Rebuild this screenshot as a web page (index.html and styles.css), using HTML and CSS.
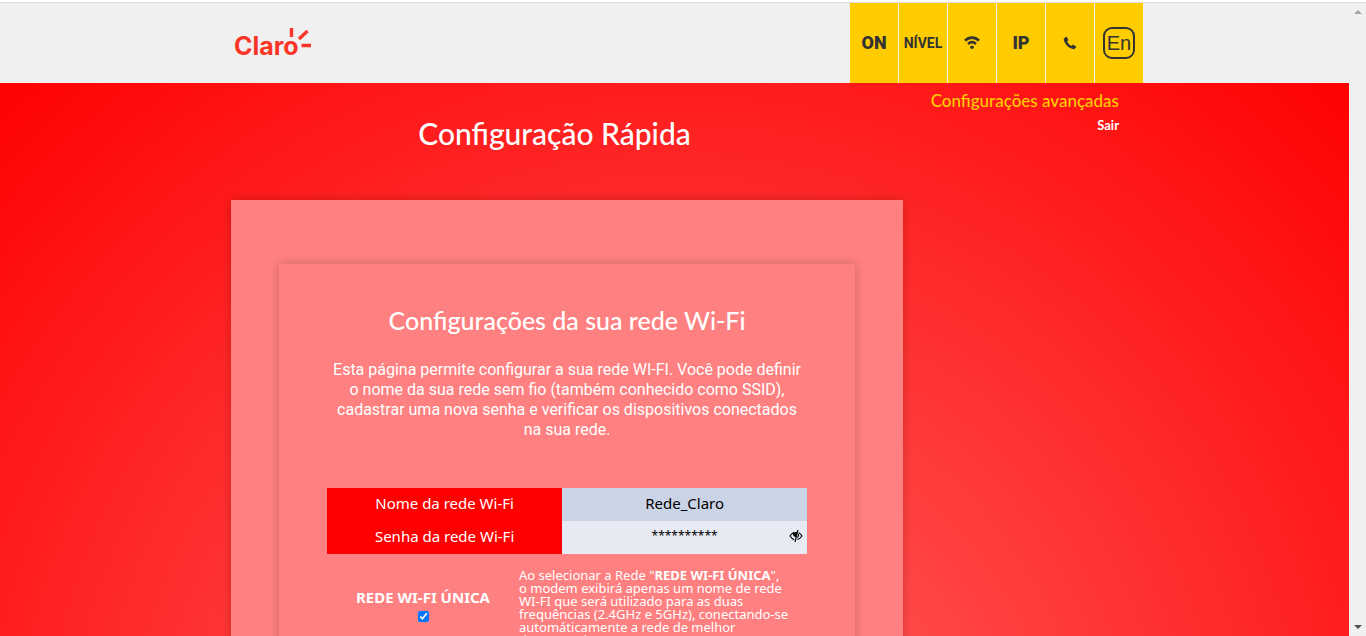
FILE: index.html
```html
<!DOCTYPE html>
<html lang="pt-BR">
  <head>
    <meta charset="UTF-8" />
    <meta name="viewport" content="width=device-width, initial-scale=1" />
    <title>Configuração Rápida</title>
    <link rel="stylesheet" href="styles.css">
  </head>
  <body>
    <div class="page">
      <header class="header">
        <div class="container header-inner">
          <a class="logo" href="#">
            <span class="logo-text">Claro</span>
            <svg class="logo-rays" width="24" height="22" viewBox="0 0 24 22" aria-hidden="true">
              <path d="M4.5 1V10M12 12L20.5 4M14.5 18.5H24" fill="none" stroke="#fb3527" stroke-width="3.4" />
            </svg>
          </a>
          <nav class="status">
            <a class="status-item" href="#">ON</a>
            <a class="status-item small" href="#">NÍVEL</a>
            <a class="status-item" href="#" aria-label="Wi-Fi">
              <svg width="16" height="14" viewBox="0 0 16 14">
                <path d="M1 4.6C5 .6 11 .6 15 4.6M4 8C6.4 5.8 9.6 5.8 12 8" fill="none" stroke="#333" stroke-width="2.6" />
                <circle cx="8" cy="11.3" r="1.8" fill="#333" />
              </svg>
            </a>
            <a class="status-item" href="#">IP</a>
            <a class="status-item" href="#" aria-label="Telefone">
              <svg width="14" height="14" viewBox="0 0 14 14">
                <path d="M1.2 2.2L3 .8Q3.6.5 4 1.2L5.2 3.8Q5.4 4.4 4.9 4.8L4 5.6Q5.4 8.4 8.2 9.9L9.3 8.9Q9.8 8.5 10.3 8.8L12.9 10.2Q13.5 10.6 13.1 11.2L11.7 12.8Q11 13.5 9.8 13.1Q2.8 10.8.8 4.2Q.5 2.9 1.2 2.2Z" fill="#333" />
              </svg>
            </a>
            <a class="status-item" href="#"><span class="lang">En</span></a>
          </nav>
        </div>
      </header>

      <main class="main">
        <div class="container main-inner">
          <div class="content">
            <h1>Configuração Rápida</h1>
            <section class="panel">
              <form class="card">
                <h2>Configurações da sua rede Wi-Fi</h2>
                <p class="intro">Esta página permite configurar a sua rede WI-FI. Você pode definir o nome da sua rede sem fio (também conhecido como SSID), cadastrar uma nova senha e verificar os dispositivos conectados na sua rede.</p>

                <table class="wifi-table">
                  <tr>
                    <th><label for="ssid">Nome da rede Wi-Fi</label></th>
                    <td><input type="text" id="ssid" value="Rede_Claro" /></td>
                  </tr>
                  <tr>
                    <th><label for="password">Senha da rede Wi-Fi</label></th>
                    <td>
                      <input type="text" class="masked" id="password" value="**********" />
                      <button type="button" class="eye" aria-label="Mostrar senha">
                        <svg width="14" height="14" viewBox="0 0 14 14">
                          <path d="M5 3.2Q2.5 4.5 1 7Q2.8 9.8 5.2 10.8M9.8 3.6Q11.6 4.8 13 7Q11.2 9.6 8.4 10.6" fill="none" stroke="#000" stroke-width="1.1" />
                          <path d="M3.8 4.4Q6 2.4 8.6 2.8L7 8Q4 7.8 3.8 4.4Z" fill="#000" />
                          <path d="M9 1L6 13M9.5 5Q10 7 8.4 8.6" fill="none" stroke="#000" stroke-width="1.1" />
                        </svg>
                      </button>
                    </td>
                  </tr>
                </table>

                <div class="single">
                  <div class="single-option">
                    <label for="single-network">REDE WI-FI ÚNICA</label>
                    <input type="checkbox" id="single-network" checked />
                  </div>
                  <p class="single-text">
                    Ao selecionar a Rede "<b>REDE WI-FI ÚNICA</b>",<br />
                    o modem exibirá apenas um nome de rede<br />
                    WI-FI que será utilizado para as duas<br />
                    frequências (2.4GHz e 5GHz), conectando-se<br />
                    automáticamente a rede de melhor<br />
                    desempenho.
                  </p>
                </div>
              </form>
            </section>
          </div>
          <aside class="links">
            <a class="advanced" href="#">Configurações avançadas</a>
            <a class="logout" href="#">Sair</a>
          </aside>
        </div>
      </main>
    </div>

    <div class="scrollbar" aria-hidden="true">
      <span class="arrow up"></span>
      <span class="arrow down"></span>
    </div>
  </body>
</html>
```
FILE: styles.css
```css
:root {
  --red: #ff0000;
  --yellow: #ffcc00;
  --dark: #333333;
  --gray: #f0f0f0;
  --title-font: Lato, sans-serif;
  --text-font: "Noto Sans", sans-serif;
}

* {
  margin: 0;
  padding: 0;
  box-sizing: border-box;
}

body {
  display: flex;
  height: 100vh;
  overflow: hidden;
  background-color: var(--gray);
  border-top: 2px solid #fff;
  font-family: var(--text-font);
  color: #fff;
}

a {
  color: inherit;
  text-decoration: none;
}

.page {
  flex: 1;
  display: flex;
  flex-direction: column;
  min-width: 0;
}

.container {
  width: 100%;
  max-width: 937px;
  margin: 0 auto;
}

/* Header */
.header-inner {
  display: flex;
  justify-content: space-between;
}

.header,
.scrollbar {
  border-top: 1px solid #dcdcdc;
}

.logo {
  display: flex;
  align-items: flex-start;
  padding: 24px 0 0 28px;
  color: #fb3527;
}

.logo-text {
  font: 700 25px/38px Inter, sans-serif;
}

.logo-rays {
  margin-left: -12px;
}

.status {
  display: flex;
  gap: 1px;
}

.status-item {
  display: flex;
  align-items: center;
  justify-content: center;
  width: 48px;
  height: 80px;
  background-color: var(--yellow);
  color: var(--dark);
  font: 900 18px/20px Roboto, sans-serif;
}

.status-item.small {
  font-size: 14px;
  font-weight: 700;
}

.lang {
  width: 32px;
  height: 32px;
  border: 2px solid var(--dark);
  border-radius: 9px;
  font: 400 20px/28px "Liberation Sans", sans-serif;
  text-align: center;
}

/* Main area */
.main {
  flex: 1;
  min-height: 0;
  background: radial-gradient(circle 980px at 50% 700px, #ff6464, var(--red));
}

.main-inner {
  display: flex;
}

.content {
  flex: 1;
}

h1 {
  padding: 30px 0 47px;
  font: 500 30px/40px var(--title-font);
  text-align: center;
}

.panel {
  margin-left: 25px;
  padding: 64px 48px;
  background-color: #ff8080;
  box-shadow: 0 0 10px rgba(0, 0, 0, 0.2);
}

.card {
  padding: 38px 48px;
  box-shadow: 0 0 10px rgba(0, 0, 0, 0.2);
}

h2 {
  margin-bottom: 22px;
  font: 500 25px/36px var(--title-font);
  text-align: center;
}

.intro {
  margin-bottom: 48px;
  font: 400 16px/20px Roboto, sans-serif;
  text-align: center;
}

/* Network table */
.wifi-table {
  width: 100%;
  border-collapse: collapse;
  table-layout: fixed;
  font-size: 15px;
}

.wifi-table tr {
  height: 33px;
  background-color: #e7eaf3;
}

.wifi-table tr:first-child {
  background-color: #cbd3e6;
}

.wifi-table th {
  width: 49%;
  padding-bottom: 4px;
  background-color: var(--red);
  font-weight: 400;
}

.wifi-table td {
  position: relative;
  padding-bottom: 4px;
}

.wifi-table input {
  display: block;
  width: 100%;
  border: none;
  background: none;
  color: #000;
  font: 15px/20px var(--text-font);
  text-align: center;
}

.wifi-table .masked {
  font-size: 12px;
}

.eye {
  position: absolute;
  right: 4px;
  top: 8px;
  border: none;
  background: none;
  line-height: 0;
}

/* Single network option */
.single {
  display: grid;
  grid-template-columns: 2fr 3fr;
  margin-top: 15px;
}

.single-option {
  display: flex;
  flex-direction: column;
  align-items: center;
  gap: 4px;
  padding-top: 18px;
  font: 700 15px/20px var(--text-font);
}

.single-option input {
  width: 11px;
  height: 11px;
}

.single-text {
  font-size: 13px;
  line-height: 13px;
  white-space: nowrap;
}

/* Side links */
.links {
  display: flex;
  flex-direction: column;
  align-items: flex-end;
  gap: 4px;
  width: 240px;
  padding: 8px 24px 0 0;
}

.advanced {
  color: var(--yellow);
  font: 500 17px/20px var(--title-font);
}

.logout {
  font: 700 13px/20px var(--title-font);
}

/* Scrollbar */
.scrollbar {
  display: flex;
  flex-direction: column;
  justify-content: space-between;
  align-items: center;
  width: 17px;
  padding: 7px 0;
}

.arrow {
  border: 4px solid transparent;
}

.up {
  border-top: none;
  border-bottom-color: #a3a3a3;
}

.down {
  border-bottom: none;
  border-top-color: #505050;
}
```
